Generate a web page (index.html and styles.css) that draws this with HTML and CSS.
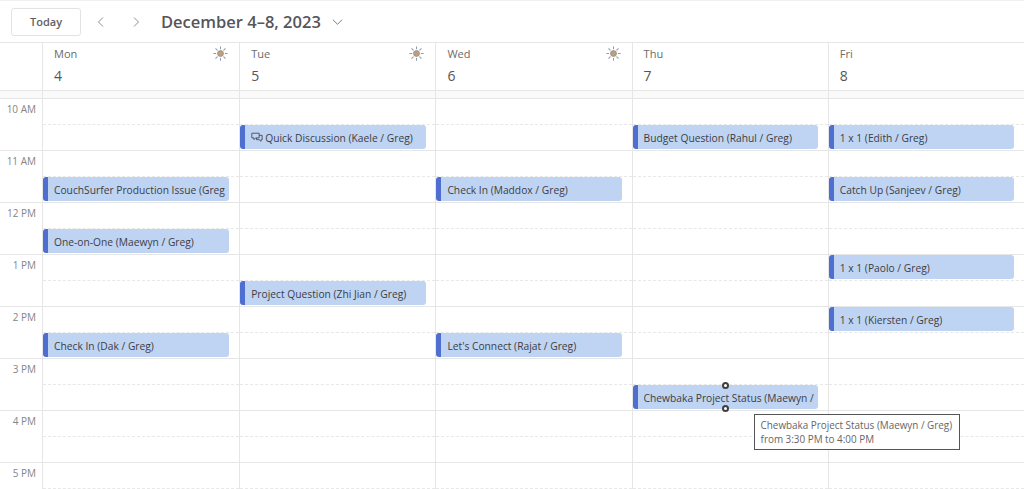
FILE: index.html
```html
<!DOCTYPE html>
<html lang="en">
<head>
<meta charset="utf-8">
<title>Calendar</title>
<link rel="stylesheet" href="styles.css">
</head>
<body>
<svg class="defs" width="0" height="0" aria-hidden="true">
  <symbol id="sun" viewBox="0 0 16 16">
    <g stroke="#8f9cb5" stroke-width="1.1" stroke-linecap="round">
      <path d="M8 .8v2.2M8 13v2.2M.8 8H3M13 8h2.2M2.9 2.9l1.6 1.6M11.5 11.5l1.6 1.6M2.9 13.1l1.6-1.6M11.5 4.5l1.6-1.6"/>
    </g>
    <circle cx="8" cy="8" r="3.2" fill="#bd9f7e" stroke="#8d8577" stroke-width=".7"/>
  </symbol>
</svg>
<div class="app">
  <header class="toolbar">
    <button class="today">Today</button>
    <span class="nav">
      <svg class="chev" viewBox="0 0 10 12"><path d="M7 1.5 2.5 6 7 10.5"/></svg>
      <svg class="chev" viewBox="0 0 10 12"><path d="M3 1.5 7.5 6 3 10.5"/></svg>
    </span>
    <h1 class="range">December 4–8, 2023</h1>
    <svg class="caret" viewBox="0 0 12 8"><path d="M1 1.5 6 6.5 11 1.5"/></svg>
  </header>

  <div class="grid head">
    <div class="gutter"></div>
    <div class="day"><div class="dayname"><span>Mon</span><svg class="sun"><use href="#sun"/></svg></div><div class="daynum">4</div></div>
    <div class="day"><div class="dayname"><span>Tue</span><svg class="sun"><use href="#sun"/></svg></div><div class="daynum">5</div></div>
    <div class="day"><div class="dayname"><span>Wed</span><svg class="sun"><use href="#sun"/></svg></div><div class="daynum">6</div></div>
    <div class="day"><div class="dayname"><span>Thu</span></div><div class="daynum">7</div></div>
    <div class="day"><div class="dayname"><span>Fri</span></div><div class="daynum">8</div></div>
  </div>

  <div class="grid strip">
    <div class="gutter"></div><div class="day"></div><div class="day"></div><div class="day"></div><div class="day"></div><div class="day"></div>
  </div>

  <div class="grid hour">
    <div class="gutter time">10 AM</div>
    <div class="day"><div class="half"></div><div class="half"></div></div>
    <div class="day"><div class="half"></div><div class="half"><div class="event"><svg class="chat" viewBox="0 0 14 12"><path d="M1 1h8.5v5.5H5.5L3.5 8.5v-2H1zM9.5 3.5H13v5h-1.3v2L9.5 8.5H6.5V6.5"/></svg><span class="label">Quick Discussion (Kaele / Greg)</span></div></div></div>
    <div class="day"><div class="half"></div><div class="half"></div></div>
    <div class="day"><div class="half"></div><div class="half"><div class="event"><span class="label">Budget Question (Rahul / Greg)</span></div></div></div>
    <div class="day"><div class="half"></div><div class="half"><div class="event"><span class="label">1 x 1 (Edith / Greg)</span></div></div></div>
  </div>

  <div class="grid hour">
    <div class="gutter time">11 AM</div>
    <div class="day"><div class="half"></div><div class="half"><div class="event"><span class="label">CouchSurfer Production Issue (Greg / Dak)</span></div></div></div>
    <div class="day"><div class="half"></div><div class="half"></div></div>
    <div class="day"><div class="half"></div><div class="half"><div class="event"><span class="label">Check In (Maddox / Greg)</span></div></div></div>
    <div class="day"><div class="half"></div><div class="half"></div></div>
    <div class="day"><div class="half"></div><div class="half"><div class="event"><span class="label">Catch Up (Sanjeev / Greg)</span></div></div></div>
  </div>

  <div class="grid hour">
    <div class="gutter time">12 PM</div>
    <div class="day"><div class="half"></div><div class="half"><div class="event"><span class="label">One-on-One (Maewyn / Greg)</span></div></div></div>
    <div class="day"><div class="half"></div><div class="half"></div></div>
    <div class="day"><div class="half"></div><div class="half"></div></div>
    <div class="day"><div class="half"></div><div class="half"></div></div>
    <div class="day"><div class="half"></div><div class="half"></div></div>
  </div>

  <div class="grid hour">
    <div class="gutter time">1 PM</div>
    <div class="day"><div class="half"></div><div class="half"></div></div>
    <div class="day"><div class="half"></div><div class="half"><div class="event"><span class="label">Project Question (Zhi Jian / Greg)</span></div></div></div>
    <div class="day"><div class="half"></div><div class="half"></div></div>
    <div class="day"><div class="half"></div><div class="half"></div></div>
    <div class="day"><div class="half"><div class="event"><span class="label">1 x 1 (Paolo / Greg)</span></div></div><div class="half"></div></div>
  </div>

  <div class="grid hour">
    <div class="gutter time">2 PM</div>
    <div class="day"><div class="half"></div><div class="half"><div class="event"><span class="label">Check In (Dak / Greg)</span></div></div></div>
    <div class="day"><div class="half"></div><div class="half"></div></div>
    <div class="day"><div class="half"></div><div class="half"><div class="event"><span class="label">Let's Connect (Rajat / Greg)</span></div></div></div>
    <div class="day"><div class="half"></div><div class="half"></div></div>
    <div class="day"><div class="half"><div class="event"><span class="label">1 x 1 (Kiersten / Greg)</span></div></div><div class="half"></div></div>
  </div>

  <div class="grid hour">
    <div class="gutter time">3 PM</div>
    <div class="day"><div class="half"></div><div class="half"></div></div>
    <div class="day"><div class="half"></div><div class="half"></div></div>
    <div class="day"><div class="half"></div><div class="half"></div></div>
    <div class="day"><div class="half"></div><div class="half"><div class="event selected"><span class="label">Chewbaka Project Status (Maewyn / Greg)</span><i class="handle top"></i><i class="handle bottom"></i><div class="tooltip">Chewbaka Project Status (Maewyn / Greg)<br>from 3:30 PM to 4:00 PM</div></div></div></div>
    <div class="day"><div class="half"></div><div class="half"></div></div>
  </div>

  <div class="grid hour">
    <div class="gutter time">4 PM</div>
    <div class="day"><div class="half"></div><div class="half"></div></div>
    <div class="day"><div class="half"></div><div class="half"></div></div>
    <div class="day"><div class="half"></div><div class="half"></div></div>
    <div class="day"><div class="half"></div><div class="half"></div></div>
    <div class="day"><div class="half"></div><div class="half"></div></div>
  </div>

  <div class="grid hour">
    <div class="gutter time">5 PM</div>
    <div class="day"><div class="half"></div><div class="half"></div></div>
    <div class="day"><div class="half"></div><div class="half"></div></div>
    <div class="day"><div class="half"></div><div class="half"></div></div>
    <div class="day"><div class="half"></div><div class="half"></div></div>
    <div class="day"><div class="half"></div><div class="half"></div></div>
  </div>
</div>
</body>
</html>
```
FILE: styles.css
```css
* { box-sizing: border-box; }
html, body { margin: 0; height: 100%; overflow: hidden; background: #fff; }
body { font-family: "Open Sans", "Noto Sans", sans-serif; color: #424242; }
.defs { position: absolute; }
.app { height: 489px; overflow: hidden; }

.toolbar {
  height: 43px;
  display: flex;
  align-items: center;
  padding: 0 0 0 11px;
  border-top: 1px solid #f0f0f0;
  border-bottom: 1px solid #e6e6e6;
}
.today {
  width: 70px;
  height: 28px;
  padding: 0;
  font: 600 11px "Open Sans", sans-serif;
  color: #616161;
  background: #fff;
  border: 1px solid #e3e3e3;
  border-radius: 3px;
}
.nav { display: flex; gap: 25px; margin-left: 15px; }
.chev { width: 10px; height: 12px; fill: none; stroke: #8f8f8f; stroke-width: 1; }
.range {
  margin: 0 0 0 20px;
  font-size: 16.5px;
  font-weight: 600;
  color: #55555b;
  white-space: nowrap;
}
.caret { width: 11px; height: 8px; margin-left: 11px; fill: none; stroke: #6e6e6e; stroke-width: 1; }

.grid { display: grid; grid-template-columns: 43px repeat(5, 1fr); }
.gutter { border-right: 1px solid #e6e6e6; }
.day + .day { border-left: 1px solid #e6e6e6; }

.head { height: 48px; border-bottom: 1px solid #e6e6e6; }
.head .day { padding: 3px 11px 0 11px; }
.dayname { display: flex; justify-content: space-between; align-items: flex-start; font-size: 11px; line-height: 15px; color: #6b6b6b; }
.daynum { margin-top: 5px; font-size: 14px; line-height: 20px; color: #555; }
.sun { width: 15px; height: 15px; }

.strip { height: 8px; background: #fafafa; border-bottom: 1px solid #e6e6e6; }

.hour { height: 52px; border-bottom: 1px solid #e6e6e6; }
.time { padding: 3px 6px 0 0; text-align: right; font-size: 10px; line-height: 15px; color: #858585; }
.day { min-width: 0; }
.half { height: 26px; position: relative; }
.half:first-child { border-bottom: 1px dashed #e8e8e8; }

.event {
  position: relative;
  display: flex;
  align-items: center;
  gap: 2px;
  height: 24px;
  margin-right: 9.8px;
  padding: 0 2px 0 6px;
  font-size: 10.25px;
  color: #3d3d45;
  background: #bfd4f2;
  border-left: 5px solid #4f6fd0;
  border-radius: 3px;
}
.label { flex: 1; min-width: 0; padding-top: 1px; overflow: hidden; white-space: nowrap; }
.chat { flex: none; width: 12px; height: 11px; fill: none; stroke: #44444c; stroke-width: 1; }

.handle {
  position: absolute;
  left: 84px;
  width: 7px;
  height: 7px;
  background: #fff;
  border: 2px solid #3f3f3f;
  border-radius: 50%;
}
.handle.top { top: -3px; }
.handle.bottom { bottom: -3px; }

.tooltip {
  position: absolute;
  left: 116px;
  top: 29px;
  z-index: 2;
  width: 206px;
  height: 36px;
  padding: 3px 6px;
  font-size: 9.9px;
  line-height: 14px;
  color: #666;
  white-space: nowrap;
  background: #fff;
  border: 1px solid #555;
}
```
